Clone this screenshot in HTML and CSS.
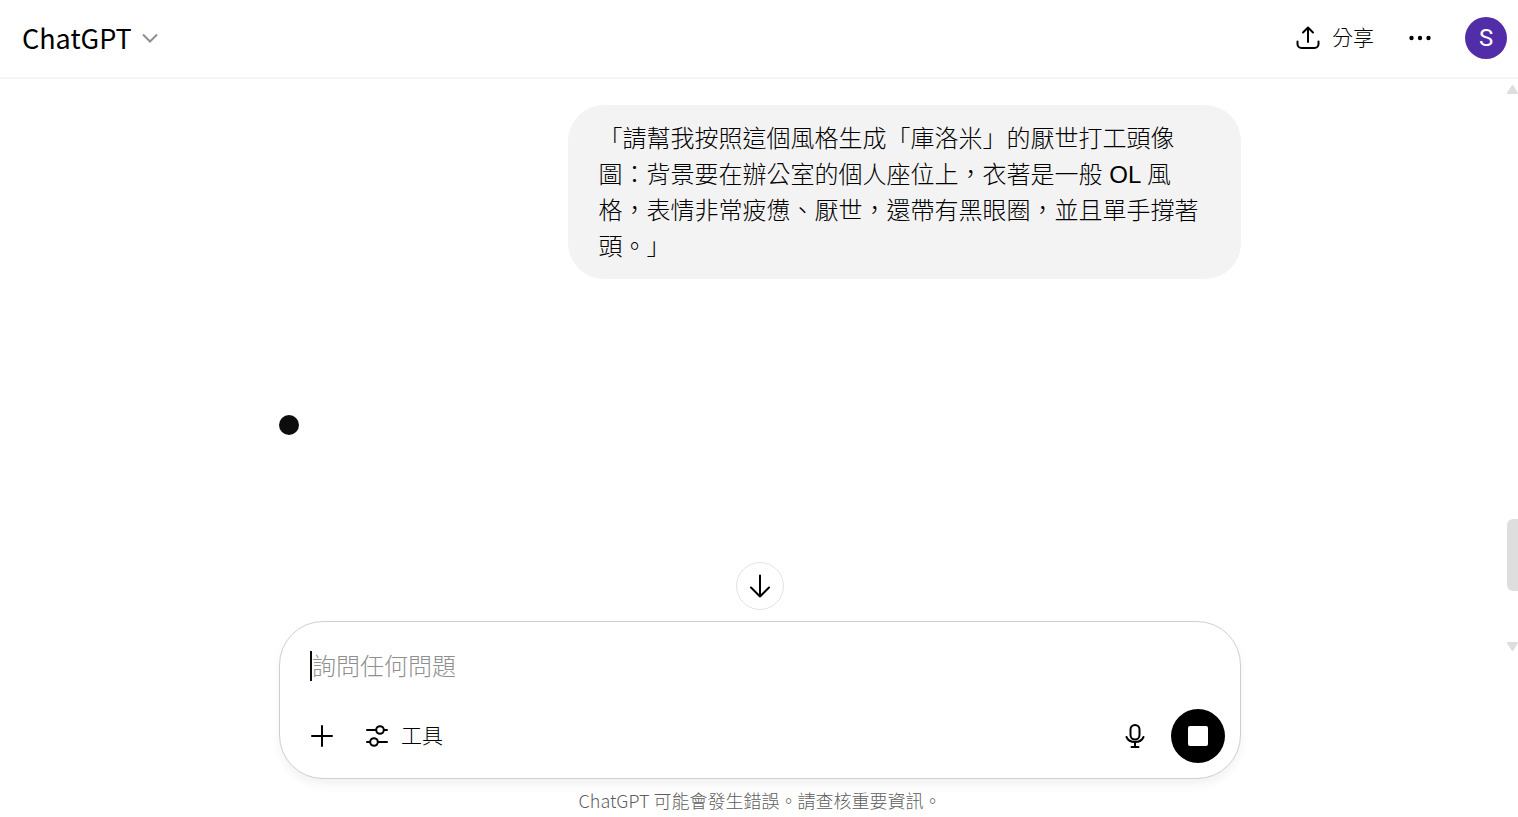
FILE: index.html
```
<!DOCTYPE html>
<html lang="zh-Hant">
  <head>
    <meta charset="UTF-8" />
    <meta name="viewport" content="width=device-width, initial-scale=1" />
    <title>ChatGPT</title>
    <link rel="stylesheet" href="styles.css">
  </head>
  <body>
    <header class="header">
      <button class="model-button" type="button">
        ChatGPT
        <svg class="chevron" width="18" height="18" viewBox="0 0 18 18" aria-hidden="true">
          <path d="M2 5.5l7 7 7-7" />
        </svg>
      </button>

      <div class="header-actions">
        <button class="share-button" type="button">
          <svg class="icon" width="24" height="24" viewBox="0 0 24 24" aria-hidden="true">
            <path d="M12 16V2M7 6.500l5-5 5 5M1.500 15.500v2.500a4 4 0 0 0 4 4h13a4 4 0 0 0 4-4v-2.500" />
          </svg>
          分享
        </button>
        <button class="more-button" type="button" aria-label="更多">
          <svg width="24" height="24" viewBox="0 0 24 24" aria-hidden="true">
            <circle cx="3.500" cy="12" r="2.200" />
            <circle cx="12" cy="12" r="2.200" />
            <circle cx="20.500" cy="12" r="2.200" />
          </svg>
        </button>
        <button class="avatar" type="button">S</button>
      </div>
    </header>

    <div class="page">
      <main class="chat">
        <div class="thread">
          <div class="message">「請幫我按照這個風格生成「庫洛米」的厭世打工頭像圖：背景要在辦公室的個人座位上，衣著是一般 OL 風格，表情非常疲憊、厭世，還帶有黑眼圈，並且單手撐著頭。」</div>
          <div class="typing-dot"></div>
        </div>

        <button class="scroll-button" type="button" aria-label="捲動至底部">
          <svg class="icon" width="24" height="24" viewBox="0 0 24 24" aria-hidden="true">
            <path d="M12 1.5v21M3 13.5l9 9 9-9" />
          </svg>
        </button>

        <form class="composer">
          <textarea class="prompt" rows="1" placeholder="詢問任何問題" aria-label="詢問任何問題"></textarea>
          <div class="toolbar">
            <button class="tool-button" type="button" aria-label="新增">
              <svg class="icon" width="24" height="24" viewBox="0 0 24 24" aria-hidden="true">
                <path d="M12 2v20M2 12h20" />
              </svg>
            </button>
            <button class="tool-button" type="button">
              <svg class="icon" width="24" height="24" viewBox="0 0 24 24" aria-hidden="true">
                <path d="M2 6h9M19 6h3M2 18h3M13 18h9" />
                <circle cx="15" cy="6" r="3.8" />
                <circle cx="9" cy="18" r="3.8" />
              </svg>
              工具
            </button>
            <button class="tool-button mic-button" type="button" aria-label="語音輸入">
              <svg class="icon" width="24" height="24" viewBox="0 0 24 24" aria-hidden="true">
                <rect x="7.500" y="1" width="9" height="14.500" rx="4.500" />
                <path d="M3.500 13a9 7.500 0 0 0 17 0M12 19v4M8.500 23h7" />
              </svg>
            </button>
            <button class="stop-button" type="button" aria-label="停止">
              <svg width="20" height="20" viewBox="0 0 20 20" aria-hidden="true">
                <rect width="20" height="20" rx="2" />
              </svg>
            </button>
          </div>
        </form>

        <p class="disclaimer">ChatGPT 可能會發生錯誤。請查核重要資訊。</p>
      </main>

      <div class="scrollbar" aria-hidden="true">
        <svg width="12" height="12" viewBox="0 0 12 12"><path d="M2 10L6.500 3 11 10z" /></svg>
        <div class="scrollbar-above"></div>
        <div class="scrollbar-thumb"></div>
        <div class="scrollbar-below"></div>
        <svg width="12" height="12" viewBox="0 0 12 12"><path d="M2 2h9L6.500 9z" /></svg>
      </div>
    </div>
  </body>
</html>
```
FILE: styles.css
```
* {
  box-sizing: border-box;
  margin: 0;
  padding: 0;
}

body {
  display: flex;
  flex-direction: column;
  min-height: 100vh;
  background: #fff;
  color: #000;
  font-family: "Noto Sans CJK TC", "Noto Sans", sans-serif;
  font-size: 24px;
  font-weight: 300;
  line-height: 36px;
}

button,
textarea {
  border: none;
  background: none;
  color: inherit;
  font: inherit;
}

button {
  display: flex;
  align-items: center;
  justify-content: center;
  cursor: pointer;
}

.icon {
  fill: none;
  stroke: currentColor;
  stroke-width: 2;
  stroke-linecap: round;
  stroke-linejoin: round;
}

/* header */
.header {
  display: flex;
  align-items: center;
  justify-content: space-between;
  height: 79px;
  padding: 0 11px 1px 22px;
  border-bottom: 2px solid #f5f5f5;
}

.model-button {
  gap: 9px;
  padding-bottom: 1px;
  font-size: 27px;
  font-weight: 400;
}

.chevron {
  fill: none;
  stroke: #8f8f8f;
  stroke-width: 2;
}

.header-actions {
  display: flex;
  align-items: center;
}

.share-button {
  gap: 12px;
  margin-right: 34px;
}

.more-button {
  margin-right: 33px;
}

.avatar {
  width: 42px;
  height: 42px;
  border-radius: 50%;
  background: #512da8;
  color: #fff;
  font-family: Roboto, sans-serif;
  font-size: 24px;
  font-weight: 400;
}

/* conversation */
.page {
  flex: 1;
  display: grid;
  grid-template-columns: 14px 1fr 12px;
}

.chat {
  grid-column: 2;
  display: flex;
  flex-direction: column;
  align-items: center;
}

.thread {
  flex: 1;
  display: flex;
  flex-direction: column;
  width: 100%;
  max-width: 962px;
  padding-top: 26px;
}

.message {
  align-self: flex-end;
  max-width: 70%;
  padding: 16px 31px 14px;
  border-radius: 36px;
  background: #f3f3f3;
  font-family: "Liberation Sans", "Noto Sans CJK TC", sans-serif;
}

.typing-dot {
  width: 20px;
  height: 20px;
  margin-top: 136px;
  border-radius: 50%;
  background: #0d0d0d;
}

.scroll-button {
  width: 48px;
  height: 48px;
  margin-bottom: 11px;
  border: 1px solid #e3e3e3;
  border-radius: 50%;
  background: #fff;
}

/* composer */
.composer {
  display: flex;
  flex-direction: column;
  gap: 28px;
  width: 100%;
  max-width: 962px;
  padding: 29px 15px 15px 30px;
  border: 1px solid #cfcfcf;
  border-radius: 44px;
  background: #fff;
  box-shadow: 0 6px 10px rgba(0, 0, 0, 0.05);
}

.prompt {
  width: 100%;
  height: 30px;
  border-left: 2px solid #0d0d0d;
  line-height: 28px;
  resize: none;
  outline: none;
  overflow: hidden;
}

.prompt::placeholder {
  color: #8f8f8f;
}

.toolbar {
  display: flex;
  align-items: center;
  gap: 31px;
}

.tool-button {
  gap: 12px;
}

.share-button,
.tool-button {
  font-family: "Liberation Sans", "Noto Sans CJK TC", sans-serif;
  font-size: 21px;
  line-height: 32px;
}

.mic-button {
  margin-left: auto;
}

.stop-button {
  width: 54px;
  height: 54px;
  margin-left: -7px;
  border-radius: 50%;
  background: #000;
  fill: #fff;
}

.disclaimer {
  padding: 6px 0 2px;
  color: #5d5d5d;
  font-size: 18px;
  line-height: 30px;
}

/* scrollbar */
.scrollbar {
  display: flex;
  flex-direction: column;
  padding: 4px 0 164px;
  fill: #dedede;
  stroke: #dedede;
  stroke-width: 2;
  stroke-linejoin: round;
}

.scrollbar-above {
  flex: 17;
}

.scrollbar-thumb {
  height: 72px;
  margin-left: 1px;
  border-radius: 6px 0 0 6px;
  background: #dedede;
}

.scrollbar-below {
  flex: 2;
}
```
